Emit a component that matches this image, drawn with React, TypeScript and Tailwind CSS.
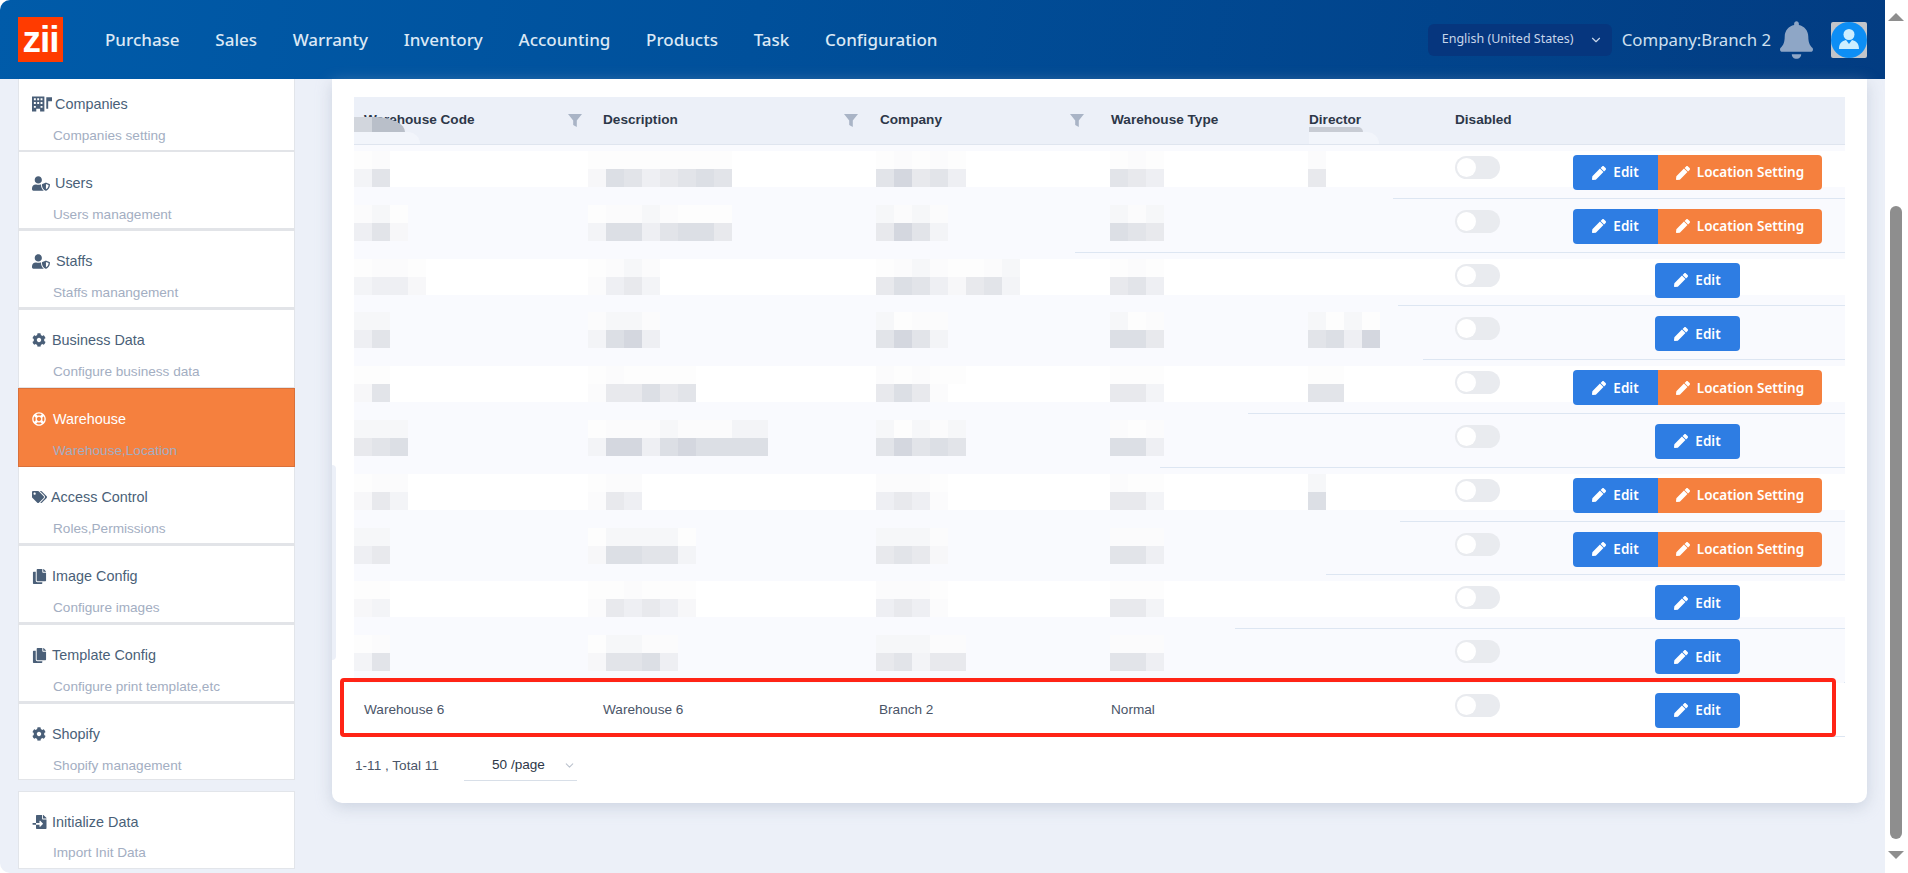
import { FaBell, FaCog, FaCopy, FaFileImport, FaPen, FaRegLifeRing, FaTags, FaUserShield } from 'react-icons/fa'
import { FiChevronDown } from 'react-icons/fi'

const nav = ['Purchase', 'Sales', 'Warranty', 'Inventory', 'Accounting', 'Products', 'Task', 'Configuration']

function CompanyIcon() {
  return (
    <svg viewBox="0 0 21 16" className="w-[20px] h-[16px] fill-current">
      <path d="M0 0h13v16H8.500v-3h-4v3H0z M2 2v2h2V2z M5.500 2v2h2V2z M9 2v2h2V2z M2 6v2h2V6z M5.500 6v2h2V6z M9 6v2h2V6z M2 10v2h2v-2z M9 10v2h2v-2z" fillRule="evenodd" />
      <path d="M15 1h6v4h-4v8h-2z" />
    </svg>
  )
}

// sidebar entries, first one is partly scrolled under the header
const side = [
  { title: 'Companies', sub: 'Companies setting', icon: <CompanyIcon />, gap: 'ml-[3px]', box: 'h-[73px] pt-[15px] border-b-2 border-b-[#e2e4e8]' },
  { title: 'Users', sub: 'Users management', icon: <FaUserShield className="w-[18px] h-[15px]" />, gap: 'ml-[5px]', box: 'h-[79px] pt-[21px] border-b-[3px] border-b-[#e2e4e8]' },
  { title: 'Staffs', sub: 'Staffs manangement', icon: <FaUserShield className="w-[18px] h-[15px]" />, gap: 'ml-[6px]', box: 'h-[79px] pt-[20px] border-b-[3px] border-b-[#e2e4e8]' },
  { title: 'Business Data', sub: 'Configure business data', icon: <FaCog className="w-[14px] h-[14px]" />, gap: 'ml-[6px]', box: 'h-[78px] pt-[20px] border-b border-b-[#e2e4e8]' },
  { title: 'Warehouse', sub: 'Warehouse,Location', icon: <FaRegLifeRing className="w-[14px] h-[14px]" />, gap: 'ml-[7px]', active: true, box: 'h-[79px] pt-[20px]' },
  { title: 'Access Control', sub: 'Roles,Permissions', icon: <FaTags className="w-[15px] h-[14px]" />, gap: 'ml-[4px]', box: 'h-[79px] pt-[20px] border-b-[3px] border-b-[#e2e4e8]' },
  { title: 'Image Config', sub: 'Configure images', icon: <FaCopy className="w-[15px] h-[15px]" />, gap: 'ml-[5px]', box: 'h-[79px] pt-[20px] border-b-[3px] border-b-[#e2e4e8]' },
  { title: 'Template Config', sub: 'Configure print template,etc', icon: <FaCopy className="w-[15px] h-[15px]" />, gap: 'ml-[5px]', box: 'h-[79px] pt-[20px] border-b-[3px] border-b-[#e2e4e8]' },
  { title: 'Shopify', sub: 'Shopify management', icon: <FaCog className="w-[14px] h-[14px]" />, gap: 'ml-[6px]', box: 'h-[76px] pt-[20px] border-b border-b-[#e2e4e8]' },
]

const shade: Record<string, string> = {
  a: 'bg-[#fbfbfc]',
  b: 'bg-[#f7f7f9]',
  c: 'bg-[#f3f4f7]',
  d: 'bg-[#eeeff3]',
  e: 'bg-[#e8e9ed]',
  f: 'bg-[#e2e4e9]',
  g: 'bg-[#dcdfe5]',
  h: 'bg-[#d4d7df]',
}

// upper line of the blur is fainter than the lower one
const shadeTop: Record<string, string> = {
  a: 'bg-[#fdfdfd]',
  b: 'bg-[#fbfbfc]',
  c: 'bg-[#f6f7f9]',
  d: 'bg-[#f3f4f7]',
}

// blurred cells: [top line, bottom line] per column, plus where the row line shows again
const rows = [
  { line: 'ml-[1039px]', loc: true, cols: [['ab', 'cf'], ['aaaaaaaa', 'bgfdefgf'], ['ababa', 'fhefd'], ['aba', 'fed'], ['b', 'e']] },
  { line: 'ml-[721px]', loc: true, cols: [['bca', 'dfb'], ['abbcbaaa', 'cggdfgge'], ['cbcb', 'ehfc'], ['cbc', 'gfe'], ['', '']] },
  { line: 'ml-[1044px]', loc: false, cols: [['abba', 'cddb'], ['abcb', 'adec'], ['abcbaabc', 'egfdbefc'], ['aba', 'efd'], ['', '']] },
  { line: 'ml-[1069px]', loc: false, cols: [['cc', 'df'], ['bccb', 'cghd'], ['cabb', 'fhfc'], ['cab', 'gge'], ['caca', 'fgdh']] },
  { line: 'ml-[894px]', loc: true, cols: [['aa', 'bf'], ['abaaaa', 'aeegef'], ['babaa', 'egea'], ['aaa', 'eec'], ['aa', 'ff']] },
  { line: 'ml-[806px]', loc: false, cols: [['ccc', 'efg'], ['abbbcbbbdd', 'chhdghgggg'], ['cacbc', 'fhfgf'], ['bab', 'ggd'], ['', '']] },
  { line: 'ml-[1046px]', loc: true, cols: [['abb', 'bec'], ['abb', 'aed'], ['bbba', 'deda'], ['baa', 'eec'], ['c', 'g']] },
  { line: 'ml-[972px]', loc: true, cols: [['cc', 'de'], ['acccca', 'bggffc'], ['cccb', 'efeb'], ['bbb', 'ffd'], ['', '']] },
  { line: 'ml-[881px]', loc: false, cols: [['aa', 'bc'], ['aabaaa', 'aededb'], ['bbba', 'deda'], ['aaa', 'eec'], ['', '']] },
  { line: 'ml-[1490px]', loc: false, cols: [['ab', 'cf'], ['accbb', 'bffgd'], ['cccbb', 'efcee'], ['bbb', 'ffd'], ['', '']] },
]

const mosaicOffset = ['ml-0', 'ml-[-5px]', 'ml-[6px]', 'ml-[9px]', 'ml-[9px]']

const columns = 'grid grid-cols-[239px_277px_231px_198px_146px_105px_1fr]'

function Mosaic({ top, bottom, className }: { top: string; bottom: string; className: string }) {
  return (
    <div className={'flex flex-col ' + className}>
      <div className="flex h-[18px]">
        {top.split('').map((c, i) => <div key={i} className={'w-[18px] ' + shadeTop[c]} />)}
      </div>
      <div className="flex h-[18px]">
        {bottom.split('').map((c, i) => <div key={i} className={'w-[18px] ' + shade[c]} />)}
      </div>
    </div>
  )
}

function Toggle() {
  return (
    <div className="mt-[11px] w-[45px] h-[23px] rounded-full bg-[#e9ebef] p-[2px]">
      <div className="w-[19px] h-[19px] rounded-full bg-white" />
    </div>
  )
}

function Actions({ loc }: { loc: boolean }) {
  return (
    <div className="flex justify-center mt-[10px] h-[35px] text-[13.500px] font-semibold text-white font-['Noto_Sans',sans-serif]">
      <button className={'flex items-center justify-center gap-[7px] w-[85px] bg-[#2e7de3] ' + (loc ? 'rounded-l-[4px]' : 'rounded-[4px]')}>
        <FaPen className="w-[14px] h-[14px]" /> Edit
      </button>
      {loc && (
        <button className="flex items-center justify-center gap-[7px] w-[164px] bg-[#f5803e] rounded-r-[4px]">
          <FaPen className="w-[14px] h-[14px]" /> Location Setting
        </button>
      )}
    </div>
  )
}

function Funnel({ className }: { className: string }) {
  return (
    <svg viewBox="0 0 14 13" className={'w-[14px] h-[13px] fill-[#a9b4c6] ' + className}>
      <path d="M0 0h14L8.800 6.500V13L5.200 11V6.500z" />
    </svg>
  )
}

export default function App() {
  return (
    <div className="flex w-screen h-screen overflow-hidden bg-white font-['Liberation_Sans',sans-serif]">
      <div className="flex flex-col w-[1885px] h-full bg-[#ecf0f8] rounded-l-[10px] overflow-hidden">
        {/* top bar */}
        <header className="flex items-center shrink-0 h-[79px] pl-[18px] pr-[18px] bg-[linear-gradient(100deg,#005ba9_0%,#00509b_40%,#023c82_100%)] font-['Noto_Sans',sans-serif]">
          <div className="flex items-end justify-center w-[45px] h-[45px] bg-[#ff3b00] text-white text-[37px] leading-[45px] font-bold tracking-[-1px] font-['Liberation_Sans',sans-serif]">
            zii
          </div>
          <nav className="flex gap-[35.700px] ml-[42px] text-[17px] font-medium text-[#dbe8f5]">
            {nav.map((n) => <span key={n}>{n}</span>)}
          </nav>
          <div className="flex items-center ml-auto">
            <div className="flex items-center justify-between w-[184px] h-[32px] pl-[14px] pr-[9px] rounded-[6px] bg-[#06367e] text-[12.500px] text-[#c6d5ea]">
              English (United States)
              <FiChevronDown className="w-[14px] h-[14px]" />
            </div>
            <span className="ml-[10px] text-[16.800px] text-[#cfe0f0]">Company:Branch 2</span>
            <FaBell className="ml-[9px] w-[33px] h-[38px] text-[#8ea6c6]" />
            <svg viewBox="0 0 36 36" className="ml-[18px] w-[36px] h-[36px]">
              <rect width="36" height="36" rx="2" fill="#c2c5ca" />
              <circle cx="18" cy="18" r="18" fill="#0d8ef5" />
              <circle cx="18" cy="12.500" r="5.500" fill="#cdeeff" />
              <path d="M8 27c0-6 3-8 7-9l3 4 3-4c4 1 7 3 7 9z" fill="#cdeeff" />
            </svg>
          </div>
        </header>

        <div className="flex flex-1 min-h-0">
          {/* left menu */}
          <aside className="shrink-0 w-[277px] ml-[18px] text-[13.600px] leading-[20px]">
            {side.map((s) => (
              <div
                key={s.title}
                className={
                  s.box + ' pl-[13px] ' +
                  (s.active ? 'bg-[#f5803e] border border-[#d9703a] text-white' : 'bg-white border-x border-x-[#e2e5ea] text-[#4a5f78]')
                }
              >
                <div className="flex items-center h-[20px] text-[14.400px]">
                  <span className="flex items-center">{s.icon}</span>
                  <span className={s.gap}>{s.title}</span>
                </div>
                <div className="mt-[12px] ml-[21px] text-[#a3aec2]">{s.sub}</div>
              </div>
            ))}
            <div className="mt-[11px] h-[78px] pt-[20px] pl-[13px] bg-white border border-[#e2e5ea] text-[#4a5f78]">
              <div className="flex items-center h-[20px] text-[14.400px]">
                <FaFileImport className="w-[15px] h-[14px]" />
                <span className="ml-[5px]">Initialize Data</span>
              </div>
              <div className="mt-[11px] ml-[21px] text-[#a3aec2]">Import Init Data</div>
            </div>
          </aside>

          {/* warehouse list */}
          <main className="relative ml-[37px] w-[1535px] h-[724px] pt-[18px] px-[22px] bg-white rounded-b-[10px] shadow-[0_4px_16px_rgba(165,175,195,0.45)]">
            <div className={columns + ' relative h-[48px] items-center bg-[#ecf0f8] border-b border-b-[#dfe5ef] text-[13.600px] font-bold text-[#2d3748]'}>
              <div className="flex items-center pl-[10px] pr-[11px]">Warehouse Code<Funnel className="ml-auto" /></div>
              <div className="flex items-center pl-[10px] pr-[12px]">Description<Funnel className="ml-auto" /></div>
              <div className="flex items-center pl-[10px] pr-[17px]">Company<Funnel className="ml-auto" /></div>
              <div className="pl-[10px]">Warehouse Type</div>
              <div className="pl-[10px]">Director</div>
              <div className="pl-[10px]">Disabled</div>
              {/* blur left over the column titles */}
              <div className="absolute left-0 top-[20px] w-[51px] h-[15px] rounded-tr-[30px_15px] bg-[linear-gradient(90deg,#d2d6dd_0%,#d2d6dd_35%,#b9bfc9_36%,#b9bfc9_100%)]" />
              <div className="absolute left-0 top-[35px] w-[66px] h-[12px] rounded-tr-[16px] bg-[#f2f5fb]" />
              <div className="absolute left-[955px] top-[30px] w-[54px] h-[5px] rounded-tr-[10px] bg-[#c8ccd4]" />
              <div className="absolute left-[955px] top-[35px] w-[70px] h-[12px] rounded-tr-[14px] bg-[#f2f5fb]" />
            </div>

            {rows.map((r, i) => (
              <div
                key={i}
                className={
                  'h-[53.800px] flex flex-col ' +
                  (i % 2 === 0
                    ? 'bg-[linear-gradient(#f9fafe_6px,#ffffff_6px,#ffffff_42px,#f9fafe_42px)]'
                    : 'bg-[#f9fafe]')
                }
              >
                <div className={columns + ' flex-1 min-h-0'}>
                  {r.cols.map((c, j) => (
                    <div key={j} className="pt-[6px]">
                      <Mosaic top={c[0]} bottom={c[1]} className={mosaicOffset[j]} />
                    </div>
                  ))}
                  <div className="pl-[10px]"><Toggle /></div>
                  <Actions loc={r.loc} />
                </div>
                <div className={'h-px bg-[#dde6f2] ' + r.line} />
              </div>
            ))}

            {/* last row is the one marked in red */}
            <div className="relative h-[54px] border-b border-b-[#dde6f2] bg-white">
              <div className={columns + ' text-[13.600px] text-[#4a5568]'}>
                <div className="pl-[10px] leading-[54px]">Warehouse 6</div>
                <div className="pl-[10px] leading-[54px]">Warehouse 6</div>
                <div className="pl-[9px] leading-[54px]">Branch 2</div>
                <div className="pl-[10px] leading-[54px]">Normal</div>
                <div />
                <div className="pl-[10px]"><Toggle /></div>
                <Actions loc={false} />
              </div>
              <div className="absolute left-[-14px] right-[9px] top-[-5px] bottom-[-1px] border-[4px] border-[#ff2416] rounded-[4px]" />
            </div>

            <div className="flex items-center mt-[14px] text-[13.600px] text-[#4a5568]">
              <span className="ml-px w-[109px]">1-11 , Total 11</span>
              <div className="flex items-center w-[113px] h-[30px] pl-[28px] pr-px border-b border-b-[#d8dfe8] text-[#2d3748]">
                50 /page
                <FiChevronDown className="ml-auto w-[13px] h-[13px] text-[#bcc3ce]" />
              </div>
            </div>

            {/* smudge on the card's left edge */}
            <div className="absolute left-0 top-[386px] w-[4px] h-[195px] rounded-r-full bg-[#ecf0f8]" />
          </main>
        </div>
      </div>

      {/* browser scrollbar */}
      <div className="relative w-[23px] h-full bg-white">
        <div className="absolute left-[3px] top-[13px] w-0 h-0 border-x-[8px] border-x-transparent border-b-[8px] border-b-[#8e8e8e]" />
        <div className="absolute left-[5px] top-[206px] w-[12px] h-[633px] rounded-full bg-[#8e8e8e]" />
        <div className="absolute left-[3px] top-[851px] w-0 h-0 border-x-[8px] border-x-transparent border-t-[8px] border-t-[#8e8e8e]" />
      </div>
    </div>
  )
}
